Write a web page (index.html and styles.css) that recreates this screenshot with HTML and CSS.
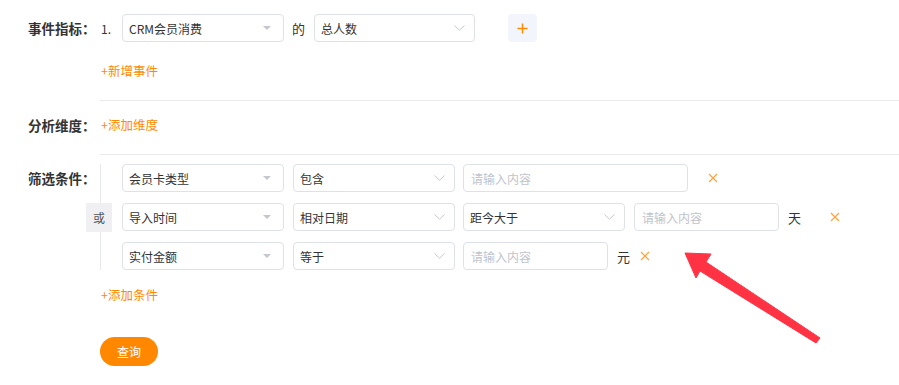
FILE: index.html
```html
<!DOCTYPE html>
<html lang="zh-CN">
<head>
<meta charset="utf-8">
<title>事件分析</title>
<link rel="stylesheet" href="styles.css">
</head>
<body>
<div class="page">
  <section class="sec sec-event">
    <div class="label">事件指标：</div>
    <div class="content">
      <div class="line">
        <span class="idx">1.</span>
        <div class="sel w162"><span>CRM会员消费</span><i class="caret"></i></div>
        <span class="word">的</span>
        <div class="sel w161"><span>总人数</span><svg class="chev" viewBox="0 0 11 6"><path d="M0.5 0.5 L5.5 5.2 L10.5 0.5"/></svg></div>
        <button class="plus" type="button"><svg viewBox="0 0 12 12"><path d="M6 0.5V11.5M0.5 6H11.5"/></svg></button>
      </div>
      <a class="add">+新增事件</a>
    </div>
  </section>

  <section class="sec sec-dim">
    <div class="label">分析维度：</div>
    <div class="content">
      <a class="add">+添加维度</a>
    </div>
  </section>

  <section class="sec sec-filter">
    <div class="label">筛选条件：</div>
    <div class="content">
      <div class="group">
        <span class="or">或</span>
        <div class="line">
          <div class="sel w162 c1"><span>会员卡类型</span><i class="caret"></i></div>
          <div class="sel w162 c2"><span>包含</span><svg class="chev" viewBox="0 0 11 6"><path d="M0.5 0.5 L5.5 5.2 L10.5 0.5"/></svg></div>
          <div class="inp w225"><span class="ph">请输入内容</span></div>
          <svg class="x x1" viewBox="0 0 10 10"><path d="M1 1L9 9M9 1L1 9"/></svg>
        </div>
        <div class="line">
          <div class="sel w162 c1"><span>导入时间</span><i class="caret"></i></div>
          <div class="sel w162 c2"><span>相对日期</span><svg class="chev" viewBox="0 0 11 6"><path d="M0.5 0.5 L5.5 5.2 L10.5 0.5"/></svg></div>
          <div class="sel w162 c3"><span>距今大于</span><svg class="chev" viewBox="0 0 11 6"><path d="M0.5 0.5 L5.5 5.2 L10.5 0.5"/></svg></div>
          <div class="inp w145 c4"><span class="ph">请输入内容</span></div>
          <span class="unit">天</span>
          <svg class="x x2" viewBox="0 0 10 10"><path d="M1 1L9 9M9 1L1 9"/></svg>
        </div>
        <div class="line">
          <div class="sel w162 c1"><span>实付金额</span><i class="caret"></i></div>
          <div class="sel w162 c2"><span>等于</span><svg class="chev" viewBox="0 0 11 6"><path d="M0.5 0.5 L5.5 5.2 L10.5 0.5"/></svg></div>
          <div class="inp w145 c4"><span class="ph">请输入内容</span></div>
          <span class="unit">元</span>
          <svg class="x x3" viewBox="0 0 10 10"><path d="M1 1L9 9M9 1L1 9"/></svg>
        </div>
      </div>
      <a class="add add-cond">+添加条件</a>
      <button class="query" type="button">查询</button>
    </div>
  </section>

  <svg class="arrow" viewBox="0 0 899 385">
    <polygon points="685,253 711,254 706,262 820,338 816,343 700,271 696,278"/>
  </svg>
</div>
</body>
</html>
```

FILE: styles.css
```css
* { box-sizing: border-box; }
html, body { margin: 0; padding: 0; background: #fff; }
body {
  font-family: "Noto Sans CJK SC", "Liberation Sans", sans-serif;
  font-size: 12px;
  color: #333;
}
.page {
  position: relative;
  width: 899px;
  height: 385px;
  overflow: hidden;
}
.sec { display: flex; }
.label {
  width: 100px;
  flex: none;
  padding-left: 28px;
  font-size: 13.5px;
  font-weight: 700;
  color: #333;
  white-space: nowrap;
}
.content {
  flex: 1;
  display: flex;
  flex-direction: column;
  align-items: flex-start;
}
.sec-event .label { padding-top: 14px; line-height: 28px; }
.sec-event .content { padding: 14px 0 19px; border-bottom: 1px solid #e9eaee; }
.sec-dim .label { padding-top: 14px; line-height: 20px; }
.sec-dim .content { padding: 14px 0 19px; border-bottom: 1px solid #e9eaee; }
.sec-filter .label { padding-top: 9px; line-height: 28px; }
.sec-filter .content { padding-top: 9px; }

.line {
  display: flex;
  align-items: center;
  height: 28px;
}
.idx { width: 22px; padding-left: 1px; font-size: 12px; color: #333; }
.word { margin: 0 9px 0 8px; font-size: 13px; color: #333; }

.sel, .inp {
  height: 28px;
  border: 1px solid #dfe1e8;
  border-radius: 4px;
  display: flex;
  align-items: center;
  justify-content: space-between;
  padding: 0 9px 0 6px;
  font-size: 12px;
  color: #333;
  background: #fff;
  flex: none;
}
.inp { padding-left: 7px; }
.ph { color: #c0c4cc; }
.w162 { width: 162px; }
.w161 { width: 161px; }
.w225 { width: 225px; }
.w145 { width: 145px; }

.caret {
  width: 0; height: 0;
  margin-right: 3px;
  border-left: 4px solid transparent;
  border-right: 4px solid transparent;
  border-top: 4px solid #c4c7cf;
}
.chev { width: 11px; height: 6px; }
.chev path { fill: none; stroke: #c6c9d0; stroke-width: 1; }

.plus {
  margin-left: 33px;
  width: 29px;
  height: 28px;
  border: 0;
  border-radius: 4px;
  background: #f2f5fb;
  display: flex;
  align-items: center;
  justify-content: center;
  padding: 0;
}
.plus svg { width: 11px; height: 11px; }
.plus path { stroke: #ff8a00; stroke-width: 1.6; fill: none; }

.add {
  display: block;
  margin-top: 19px;
  line-height: 20px;
  font-size: 12.5px;
  color: #ff8a00;
  padding-left: 1px;
  cursor: pointer;
}
.sec-dim .add { margin-top: 0; }

.group {
  position: relative;
  border-left: 1px solid #e6e7eb;
  padding-left: 21px;
  display: flex;
  flex-direction: column;
  gap: 11px;
}
.c1 { margin-right: 9px; }
.c2 { margin-right: 8px; }
.c3 { margin-right: 9px; }
.c4 { margin-right: 9px; }
.w225 { margin-right: 0; }
.or {
  position: absolute;
  left: -15px;
  top: 39px;
  width: 26px;
  height: 29px;
  background: #f0f0f2;
  display: flex;
  align-items: center;
  justify-content: center;
  font-size: 12px;
  color: #555;
}
.unit { font-size: 13px; color: #333; }
.x { width: 10px; height: 10px; flex: none; }
.x path { stroke: #ffa23a; stroke-width: 1.2; fill: none; }
.x1 { margin-left: 20px; }
.x2 { margin-left: 29px; }
.x3 { margin-left: 10px; }

.add-cond { margin-top: 15px; }
.query {
  margin-top: 32px;
  width: 58px;
  height: 29px;
  border: 0;
  border-radius: 15px;
  background: #ff8800;
  color: #fff;
  font-family: "Noto Sans CJK SC", sans-serif;
  font-size: 12px;
  padding: 0;
}

.arrow {
  position: absolute;
  left: 0;
  top: 0;
  width: 899px;
  height: 385px;
  pointer-events: none;
}
.arrow polygon {
  fill: #ff3344;
  stroke: #ff3344;
  stroke-width: 1;
  stroke-linejoin: round;
}
```
